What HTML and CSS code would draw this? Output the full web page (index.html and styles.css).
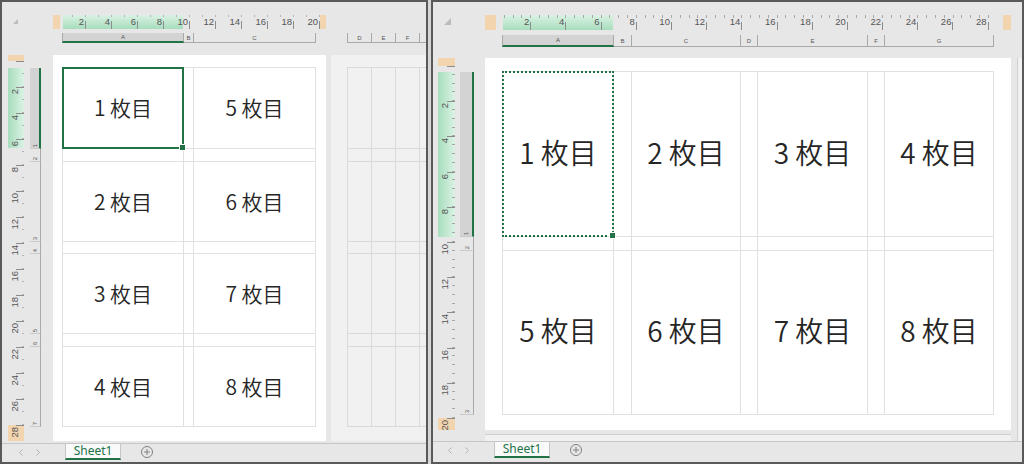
FILE: index.html
```html
<!DOCTYPE html>
<html lang="ja">
<head>
<meta charset="utf-8">
<title>ページレイアウト</title>
<link rel="stylesheet" href="styles.css">
</head>
<body>
<div class="screen">
  <section class="panel panel-l">
    <div class="corner"><svg width="5" height="5" viewBox="0 0 5 5"><polygon points="5,0 5,5 0,5" fill="#bcbcbc"/></svg></div>
    <div class="hruler">
      <span class="mg m1"></span>
      <div class="hticks">
        <span><b>2</b></span><span><b>4</b></span><span><b>6</b></span><span><b>8</b></span><span><b>10</b></span>
        <span><b>12</b></span><span><b>14</b></span><span><b>16</b></span><span><b>18</b></span><span><b>20</b></span>
      </div>
      <span class="hfill"></span>
      <span class="mg m2"></span>
    </div>
    <div class="colhdr cols-main"><span class="sel">A</span><span>B</span><span>C</span></div>
    <div class="colhdr cols-next"><span>D</span><span>E</span><span>F</span><span></span></div>
    <div class="vruler">
      <span class="mg"></span>
      <span class="vt"></span>
      <span class="vt"><b>2</b></span><span class="vt"><b>4</b></span><span class="vt"><b>6</b></span><span class="vt"><b>8</b></span>
      <span class="vt"><b>10</b></span><span class="vt"><b>12</b></span><span class="vt"><b>14</b></span><span class="vt"><b>16</b></span>
      <span class="vt"><b>18</b></span><span class="vt"><b>20</b></span><span class="vt"><b>22</b></span><span class="vt"><b>24</b></span>
      <span class="vt"><b>26</b></span>
      <span class="vt last"><b>28</b></span>
    </div>
    <div class="rowhdr">
      <span class="sel"><b>1</b></span><span><b>2</b></span><span><b>3</b></span><span><b>4</b></span><span><b>5</b></span><span><b>6</b></span><span><b>7</b></span>
    </div>
    <div class="page">
      <div class="sheet">
        <div class="cell sel">1 枚目</div><div class="cell"></div><div class="cell">5 枚目</div>
        <div class="cell"></div><div class="cell"></div><div class="cell"></div>
        <div class="cell">2 枚目</div><div class="cell"></div><div class="cell">6 枚目</div>
        <div class="cell"></div><div class="cell"></div><div class="cell"></div>
        <div class="cell">3 枚目</div><div class="cell"></div><div class="cell">7 枚目</div>
        <div class="cell"></div><div class="cell"></div><div class="cell"></div>
        <div class="cell">4 枚目</div><div class="cell"></div><div class="cell">8 枚目</div>
      </div>
    </div>
    <div class="nextpage">
      <div class="ghost"><i></i><i></i><i></i><i></i><i></i><i></i><i></i></div>
    </div>
    <div class="tabbar">
      <span class="nav"><svg width="4" height="7" viewBox="0 0 4 7"><path d="M3.5 .5 .5 3.5 3.5 6.5" fill="none" stroke="#b3b3b3"/></svg></span>
      <span class="nav"><svg width="4" height="7" viewBox="0 0 4 7"><path d="M.5 .5 3.5 3.5 .5 6.5" fill="none" stroke="#b3b3b3"/></svg></span>
      <span class="tab">Sheet1</span>
      <svg class="add" width="12" height="12" viewBox="0 0 12 12"><circle cx="6" cy="6" r="5.5" fill="none" stroke="#808080"/><path d="M6 3v6M3 6h6" stroke="#808080"/></svg>
    </div>
  </section>

  <section class="panel panel-r">
    <div class="corner"><svg width="7" height="7" viewBox="0 0 7 7"><polygon points="7,0 7,7 0,7" fill="#bcbcbc"/></svg></div>
    <div class="hruler">
      <span class="mg m1"></span>
      <div class="hticks">
        <span><b>2</b></span><span><b>4</b></span><span><b>6</b></span><span><b>8</b></span><span><b>10</b></span>
        <span><b>12</b></span><span><b>14</b></span><span><b>16</b></span><span><b>18</b></span><span><b>20</b></span>
        <span><b>22</b></span><span><b>24</b></span><span><b>26</b></span><span><b>28</b></span>
      </div>
      <span class="hfill"></span>
      <span class="mg m2"></span>
    </div>
    <div class="colhdr cols-main"><span class="sel">A</span><span>B</span><span>C</span><span>D</span><span>E</span><span>F</span><span>G</span></div>
    <div class="vruler">
      <span class="mg"></span>
      <span class="vt"></span>
      <span class="vt"><b>2</b></span><span class="vt"><b>4</b></span><span class="vt"><b>6</b></span><span class="vt"><b>8</b></span>
      <span class="vt"><b>10</b></span><span class="vt"><b>12</b></span><span class="vt"><b>14</b></span><span class="vt"><b>16</b></span>
      <span class="vt"><b>18</b></span>
      <span class="vt last"><b>20</b></span>
    </div>
    <div class="rowhdr">
      <span class="sel"><b>1</b></span><span><b>2</b></span><span><b>3</b></span>
    </div>
    <div class="page">
      <div class="sheet">
        <div class="cell sel">1 枚目</div><div class="cell"></div><div class="cell">2 枚目</div><div class="cell"></div><div class="cell">3 枚目</div><div class="cell"></div><div class="cell">4 枚目</div>
        <div class="cell"></div><div class="cell"></div><div class="cell"></div><div class="cell"></div><div class="cell"></div><div class="cell"></div><div class="cell"></div>
        <div class="cell">5 枚目</div><div class="cell"></div><div class="cell">6 枚目</div><div class="cell"></div><div class="cell">7 枚目</div><div class="cell"></div><div class="cell">8 枚目</div>
      </div>
    </div>
    <div class="nextside"></div>
    <div class="nextbelow"></div>
    <div class="tabbar">
      <span class="nav"><svg width="4" height="7" viewBox="0 0 4 7"><path d="M3.5 .5 .5 3.5 3.5 6.5" fill="none" stroke="#b3b3b3"/></svg></span>
      <span class="nav"><svg width="4" height="7" viewBox="0 0 4 7"><path d="M.5 .5 3.5 3.5 .5 6.5" fill="none" stroke="#b3b3b3"/></svg></span>
      <span class="tab">Sheet1</span>
      <svg class="add" width="12" height="12" viewBox="0 0 12 12"><circle cx="6" cy="6" r="5.5" fill="none" stroke="#808080"/><path d="M6 3v6M3 6h6" stroke="#808080"/></svg>
    </div>
  </section>
</div>
</body>
</html>
```

FILE: styles.css
```css
* { box-sizing: border-box; margin: 0; padding: 0; }
html, body { width: 1024px; height: 464px; overflow: hidden; }
body { background: #d6d6d6; font-family: "Liberation Sans", Arial, sans-serif; color: #444; }

.screen { display: flex; gap: 3px; height: 464px; }

.panel {
  height: 464px;
  border: 2px solid #595959;
  background: #e7e7e7;
  display: grid;
  overflow: hidden;
}
.panel-l {
  width: 428px;
  grid-template-columns: 6px 16px 6px 11px 12px 273px 5px 95px;
  grid-template-rows: 13px 14px 4px 10px 12px 386px 2px 19px;
}
.panel-r {
  width: 593px;
  grid-template-columns: 5px 17px 5px 14px 11px 526px 6px 5px;
  grid-template-rows: 13px 15px 5px 12px 11px 372px 4px 7px 21px;
}

/* corner */
.corner { grid-column: 1 / 5; grid-row: 1 / 4; display: flex; align-items: flex-start; }
.panel-l .corner { padding: 17px 0 0 11px; }
.panel-r .corner { padding: 16px 0 0 11px; }

/* horizontal ruler */
.hruler { grid-column: 6; grid-row: 2; display: flex; }
.panel-l .hruler { background: linear-gradient(#dbf2e4, #a7ddbd) 10px 0 / 120px 100% no-repeat; }
.panel-r .hruler { background: linear-gradient(#dbf2e4, #a7ddbd) 18px 0 / 110px 100% no-repeat; }
.mg { background: #f2d4ae; flex: none; }
.panel-l .hruler .m1 { width: 7px; }
.panel-l .hruler .m2 { width: 6px; }
.panel-r .hruler .m1 { width: 11px; }
.panel-r .hruler .m2 { width: 8px; }
.hfill { flex: 1; }
.hticks { display: flex; flex: none; }
.panel-l .hticks { background: repeating-linear-gradient(90deg, transparent 0 12px, #b4b4b4 12px 13px) 0 0 / 100% 2px no-repeat; }
.panel-r .hticks { background: repeating-linear-gradient(90deg, transparent 0 7.8px, #a8a8a8 7.8px 8.8px) 0 0 / 100% 3px no-repeat; }
.hticks span {
  flex: none;
  display: flex;
  justify-content: flex-end;
  padding: 3px 2px 0 0;
  background: linear-gradient(#8c8c8c, #8c8c8c) right bottom / 1px 8px no-repeat;
}
.panel-l .hticks span { width: 26px; }
.panel-r .hticks span { width: 35.2px; }
.hticks b { font-weight: normal; font-size: 9.5px; line-height: 8px; color: #555; }

/* vertical ruler */
.vruler { grid-column: 2; grid-row: 6; display: flex; flex-direction: column; }
.panel-l .vruler {
  background:
    repeating-linear-gradient(180deg, transparent 0 12px, #b4b4b4 12px 13px) right 0 top 6px / 2px 100% no-repeat,
    linear-gradient(90deg, #a7ddbd, #dbf2e4) 0 13px / 100% 80px no-repeat;
}
.panel-r .vruler {
  background:
    repeating-linear-gradient(180deg, transparent 0 7.8px, #a8a8a8 7.8px 8.8px) right 0 top 8px / 3px 100% no-repeat,
    linear-gradient(90deg, #a7ddbd, #dbf2e4) 0 14px / 100% 165px no-repeat;
}
.panel-l .vruler .mg { height: 6px; }
.panel-r .vruler .mg { height: 8px; }
.vt {
  flex: none;
  display: flex;
  align-items: flex-start;
  padding: 2px 0 0 2px;
  background: linear-gradient(#8c8c8c, #8c8c8c) right top / 8px 1px no-repeat;
}
.panel-l .vt { height: 26px; }
.panel-r .vt { height: 35.2px; }
.vt.last { flex: 1; height: auto; background-color: #f2d4ae; }
.vt b {
  writing-mode: vertical-rl;
  transform: rotate(180deg);
  font-weight: normal;
  font-size: 9.5px;
  line-height: 9px;
  color: #555;
}

/* column headers */
.colhdr { grid-row: 4; display: grid; align-self: stretch; }
.cols-main { grid-column: 6; }
.cols-next { grid-column: 8; overflow: hidden; }
.colhdr span {
  display: flex;
  align-items: center;
  justify-content: center;
  font-size: 6px;
  color: #555;
  border-right: 1px solid #a9a9a9;
  border-bottom: 1px solid #a9a9a9;
}
.colhdr span:first-child { border-left: 1px solid #a9a9a9; }
.colhdr .sel { background: #d3d3d3; border-bottom: 2px solid #217346; }
.panel-l .cols-main { padding-left: 9px; grid-template-columns: 122px 10px 122px; }
.panel-l .cols-next { padding-left: 16px; grid-template-columns: 25px 24px 24px 24px; }
.panel-r .cols-main { padding-left: 17px; grid-template-columns: 112px 18px 109px 17px 110px 17px 109px; }

/* row headers */
.rowhdr { grid-column: 4; grid-row: 6; display: grid; align-content: start; }
.panel-l .rowhdr { padding-top: 13px; grid-template-rows: 81px 13px 80px 12px 80px 13px 80px; }
.panel-r .rowhdr { padding-top: 14px; grid-template-rows: 165px 14px 164px; }
.rowhdr span {
  display: flex;
  align-items: flex-end;
  justify-content: center;
  padding-bottom: 1px;
  border-right: 1px solid #a9a9a9;
  border-bottom: 1px solid #c9c9c9;
}
.rowhdr .sel { background: #d3d3d3; border-right: 2px solid #217346; }
.rowhdr b {
  writing-mode: vertical-rl;
  transform: rotate(180deg);
  font-weight: normal;
  font-size: 6px;
  color: #555;
}

/* page */
.page { grid-column: 6; grid-row: 6; background: #fff; }
.panel-l .page { padding: 12px 0 0 9px; }
.panel-r .page { padding: 13px 0 0 17px; }
.sheet {
  display: grid;
  width: max-content;
  border-top: 1px solid #e0e0e0;
  border-left: 1px solid #e0e0e0;
}
.panel-l .sheet { grid-template-columns: 121px 10px 122px; grid-template-rows: 81px 13px 80px 12px 80px 13px 80px; }
.panel-r .sheet { grid-template-columns: 111px 18px 109px 17px 110px 17px 109px; grid-template-rows: 165px 14px 164px; }
.cell {
  display: flex;
  align-items: center;
  justify-content: center;
  border-right: 1px solid #e0e0e0;
  border-bottom: 1px solid #e0e0e0;
  font-family: "Noto Sans CJK JP", "Noto Sans", sans-serif;
  font-weight: 350;
  color: #262626;
  white-space: nowrap;
}
.panel-l .cell { font-size: 21px; padding-bottom: 2px; }
.panel-r .cell { font-size: 28px; padding-bottom: 5px; }
.cell.sel { position: relative; }
.cell.sel::before { content: ""; position: absolute; inset: -1px; }
.panel-l .cell.sel::before { border: 2px solid #217346; }
.panel-r .cell.sel::before { border: 2px dotted #217346; }
.cell.sel::after {
  content: "";
  position: absolute;
  right: -3px;
  bottom: -3px;
  width: 5px;
  height: 5px;
  background: #217346;
  border: 1px solid #fff;
}

/* neighbouring pages */
.nextpage { grid-column: 8; grid-row: 6; background: #f1f1f1; padding: 12px 0 0 16px; overflow: hidden; }
.ghost {
  display: grid;
  width: 120px;
  grid-template-rows: 81px 13px 80px 12px 80px 13px 80px;
  border-top: 1px solid #d9d9d9;
  background: repeating-linear-gradient(90deg, #d9d9d9 0 1px, transparent 1px 24px);
}
.ghost i { border-bottom: 1px solid #d9d9d9; }
.nextside { grid-column: 8; grid-row: 6 / 9; background: #f1f1f1; border-left: 1px solid #cfcfcf; }
.nextbelow { grid-column: 6; grid-row: 8; background: #f1f1f1; border-top: 1px solid #cfcfcf; }

/* sheet tabs */
.tabbar {
  grid-column: 1 / -1;
  grid-row: -2 / -1;
  display: flex;
  align-items: flex-start;
  border-top: 1px solid #c6c6c6;
  background: #e7e7e7;
}
.panel-l .tabbar { padding-left: 17px; }
.panel-r .tabbar { padding-left: 15px; }
.nav { width: 17px; height: 16px; display: flex; align-items: center; }
.tab {
  margin-left: 12px;
  width: 56px;
  height: 16px;
  display: flex;
  align-items: center;
  justify-content: center;
  background: #fafafa;
  border-left: 1px solid #c6c6c6;
  border-right: 1px solid #c6c6c6;
  border-bottom: 2px solid #217346;
  color: #217346;
  font-family: "Noto Sans", sans-serif;
  font-size: 12px;
  line-height: 1;
}
.add { margin: 2px 0 0 20px; }
```
